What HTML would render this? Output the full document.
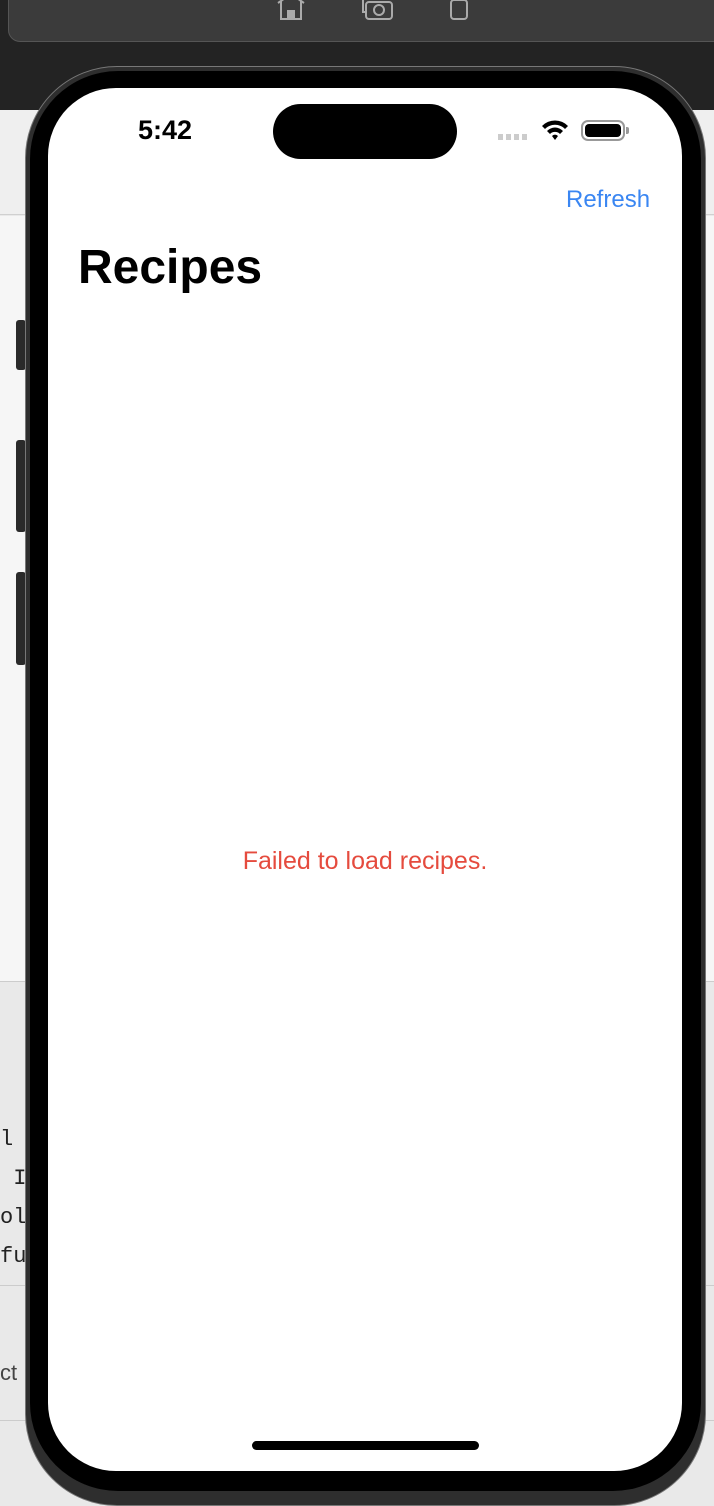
<!DOCTYPE html>
<html><head><meta charset="utf-8"><style>
*{margin:0;padding:0;box-sizing:border-box}
body{width:714px;height:1486px;overflow:hidden;position:relative;background:#e9e9e9;font-family:"Liberation Sans",sans-serif}
.abs{position:absolute}
</style></head><body>
<div class="abs" style="left:0;top:0;width:714px;height:110px;background:#232323"></div>
<div class="abs" style="left:8px;top:-20px;width:720px;height:62px;background:#3b3b3b;border-radius:12px;border:1px solid #555"></div>
<svg class="abs" style="left:270px;top:0" width="200" height="22" viewBox="0 0 200 22">
<g fill="none" stroke="#aaa" stroke-width="2">
<path d="M8 3 L21 -6 L34 3 M11 1 V19 H31 V1"/>
<rect x="96" y="2" width="26" height="17" rx="3"/><circle cx="109" cy="10" r="5"/><path d="M93 -2 V12 H96"/>
<rect x="181" y="0" width="16" height="19" rx="3"/>
</g><rect x="17" y="10" width="8" height="9" fill="#aaa"/></svg>
<div class="abs" style="left:0;top:110px;width:714px;height:105px;background:#efefef;border-bottom:1px solid #d0d0d0"></div>
<div class="abs" style="left:0;top:216px;width:714px;height:766px;background:#f6f6f6;border-bottom:1px solid #ccc"></div>
<div class="abs" style="left:0;top:1285px;width:714px;height:1px;background:#ccc"></div>
<div class="abs" style="left:0;top:1420px;width:714px;height:1px;background:#ccc"></div>
<div class="abs" style="left:0;top:1120px;font-family:'Liberation Mono',monospace;font-size:22px;line-height:39px;color:#222">l<br>&nbsp;I<br>ol<br>fu</div>
<div class="abs" style="left:0;top:1360px;font-size:22px;color:#444">ct</div>
<div class="abs" style="left:16px;top:320px;width:10px;height:50px;background:#2a2a2a;border-radius:3px"></div>
<div class="abs" style="left:16px;top:440px;width:10px;height:92px;background:#2a2a2a;border-radius:3px"></div>
<div class="abs" style="left:16px;top:572px;width:10px;height:93px;background:#2a2a2a;border-radius:3px"></div>
<div class="abs" style="left:25px;top:66px;width:681px;height:1440px;background:#2e2e2e;border-radius:92px;border:1px solid #777"></div>
<div class="abs" style="left:30px;top:71px;width:671px;height:1420px;background:#000;border-radius:88px"></div>
<div class="abs" style="left:48px;top:88px;width:634px;height:1383px;background:#fff;border-radius:68px"></div>
<div class="abs" style="left:273px;top:104px;width:184px;height:55px;background:#000;border-radius:28px"></div>
<div class="abs" style="left:138px;top:115px;font-size:27px;font-weight:bold;color:#000">5:42</div>
<div class="abs" style="left:498px;top:134px;width:32px;height:6px;background:repeating-linear-gradient(90deg,#ccc 0 5px,transparent 5px 8px)"></div>
<svg class="abs" style="left:540px;top:118px" width="30" height="24" viewBox="0 0 30 24"><path d="M2 8 A18 18 0 0 1 28 8 L25 11 A14 14 0 0 0 5 11Z M7 13 A11 11 0 0 1 23 13 L20 16 A7 7 0 0 0 10 16Z M12 18 A4 4 0 0 1 18 18 L15 22Z" fill="#000"/></svg>
<div class="abs" style="left:581px;top:120px;width:44px;height:21px;border:2px solid #999;border-radius:7px;padding:2px"><div style="width:100%;height:100%;background:#000;border-radius:4px"></div></div>
<div class="abs" style="left:626px;top:127px;width:3px;height:7px;background:#999;border-radius:0 2px 2px 0"></div>
<div class="abs" style="left:566px;top:186px;font-size:24px;color:#3a86f2">Refresh</div>
<div class="abs" style="left:78px;top:240px;font-size:48px;font-weight:bold;color:#000">Recipes</div>
<div class="abs" style="left:0;width:730px;top:847px;text-align:center;font-size:25px;color:#e54b3e">Failed to load recipes.</div>
<div class="abs" style="left:252px;top:1441px;width:227px;height:9px;background:#000;border-radius:5px"></div>
</body></html>
